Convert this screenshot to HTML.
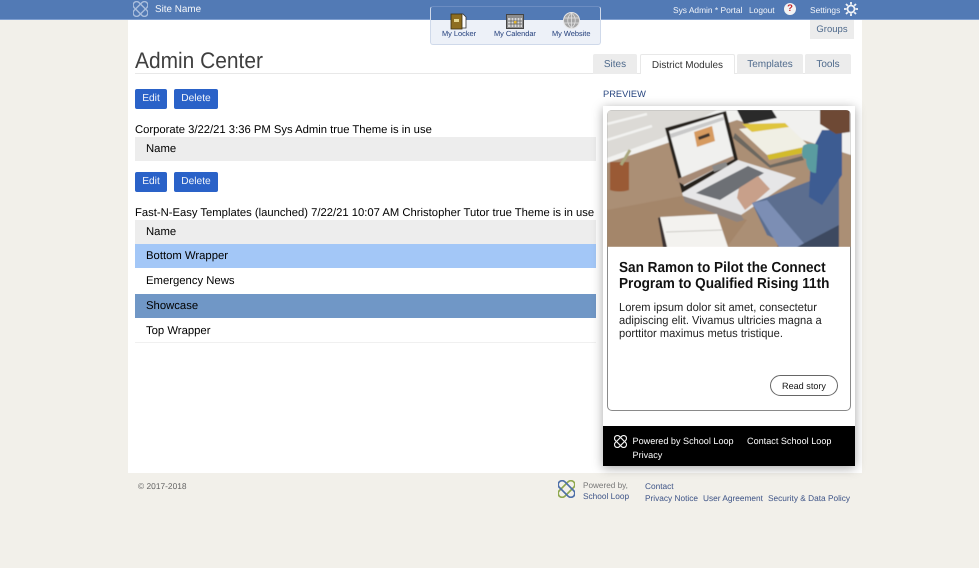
<!DOCTYPE html>
<html><head><meta charset="utf-8"><style>
html,body{margin:0;padding:0}
body{width:979px;height:568px;position:relative;overflow:hidden;background:#f2f0ea;font-family:"Liberation Sans",sans-serif;color:#000;text-rendering:geometricPrecision}
#wrap{position:absolute;left:0;top:0;width:979px;height:568px;filter:blur(.3px)}
.a{position:absolute;white-space:nowrap}
.bar{left:0;top:0;width:979px;height:19px;background:#527ab5;border-bottom:1px solid #7f9fd0;box-sizing:content-box}
.w{color:#f4f6fa;font-size:8.4px;line-height:12px}
.tab{background:#ececec;color:#4f6a8c;font-size:10px;text-align:center;box-sizing:border-box;height:20px;line-height:21px;top:54px;border-radius:2px 2px 0 0}
.btn{background:#2a62c8;color:#f2f5fb;font-size:10.2px;text-align:center;height:20px;line-height:20.5px;border-radius:2px;top:89px}
.row{left:135px;width:461px;height:24px;line-height:24px;font-size:11.3px;padding-left:11px;box-sizing:border-box}
.m{font-size:7.4px;color:#1d3a78;line-height:10px}
.l{font-size:8.3px;color:#3e5487;line-height:10px}
.t{font-size:11.25px;line-height:12px;color:#000}
.sb{font-weight:bold;font-size:14.6px;line-height:17px;color:#111;transform:scaleX(.93);transform-origin:0 0}
.p{font-size:11.6px;line-height:13px;color:#222;transform:scaleX(.96);transform-origin:0 0}
.f{color:#fff;font-size:9.1px;line-height:12px}
</style></head><body><div id="wrap">
<div class="a" style="left:128px;top:19px;width:734px;height:454px;background:#fff"></div>
<div class="a bar"></div>

<svg class="a" style="left:133px;top:1px" width="15" height="16" viewBox="0 0 15 16" fill="none" stroke="#a9bedd" stroke-width="1.400"><rect x="4" y="-1" width="7" height="18" rx="3.500" transform="rotate(45 7.500 8)"/><rect x="4" y="-1" width="7" height="18" rx="3.500" transform="rotate(-45 7.500 8)"/></svg>
<div class="a w" style="left:155px;top:3.500px;font-size:9.900px">Site Name</div>
<div class="a w" style="left:673px;top:3.500px">Sys Admin * Portal</div>
<div class="a w" style="left:749px;top:3.500px">Logout</div>
<div class="a" style="left:784px;top:3px;width:12px;height:12px;border-radius:50%;background:#f4f4f4;color:#c3262c;font:bold 9.500px/12px 'Liberation Sans',sans-serif;text-align:center">?</div>
<div class="a w" style="left:810px;top:3.500px">Settings</div>
<svg class="a" style="left:844px;top:2px" width="14" height="14" viewBox="0 0 14 14" fill="none" stroke="#f2f4f8"><circle cx="7" cy="7" r="3.500" stroke-width="1.700"/><path stroke-width="1.800" d="M7 0v2.500M7 11.500V14M0 7h2.500M11.500 7H14M2 2l1.800 1.800M10.200 10.200 12 12M2 12l1.800-1.800M10.200 3.800 12 2"/></svg>

<div class="a" style="left:430px;top:6px;width:171px;height:39px;border:1px solid #cfd9ea;border-top-color:#6c8dc2;border-radius:3px;box-sizing:border-box;background:linear-gradient(#527ab5 0,#527ab5 13px,#edf1f8 13px)"></div>
<svg class="a" style="left:450px;top:13px" width="18" height="18" viewBox="0 0 18 18"><path d="M10 1h3l3 3v11h-6z" fill="#fff" stroke="#333" stroke-width=".8"/><rect x="1" y="1" width="11" height="15" fill="#8e6d20" stroke="#3a2f15" stroke-width=".8"/><rect x="4" y="6" width="5" height="3" fill="#e5d690"/></svg>
<svg class="a" style="left:506px;top:14px" width="18" height="16" viewBox="0 0 18 16"><rect x=".5" y=".5" width="17" height="14" fill="#8c8c8c" stroke="#444"/><rect x="2" y="4" width="14" height="9" fill="#d8d8d8"/><path d="M2 7h14M2 10h14M5 4v9M8 4v9M11 4v9M14 4v9" stroke="#555" stroke-width=".7"/><rect x="8" y="7" width="2.500" height="2.500" fill="#e2b530"/></svg>
<svg class="a" style="left:563px;top:12px" width="17" height="17" viewBox="0 0 17 17"><circle cx="8.500" cy="8.500" r="8" fill="#a5a5a5" stroke="#e6e6e6"/><path d="M1 6h15M1 11h15M8.500 1c-5 4-5 11 0 15M8.500 1c5 4 5 11 0 15M8.500 1v15" stroke="#e2e2e2" stroke-width=".8" fill="none"/></svg>
<div class="a m" style="left:442px;top:28.500px">My Locker</div>
<div class="a m" style="left:494px;top:28.500px">My Calendar</div>
<div class="a m" style="left:552px;top:28.500px">My Website</div>

<div class="a" style="left:810px;top:20px;width:44px;height:19px;background:#ececec;color:#4f6a8c;font-size:9.500px;line-height:19px;text-align:center">Groups</div>

<div class="a" style="left:135px;top:47px;font-size:22.500px;line-height:28px;color:#3f3f3f;transform:scaleX(.93);transform-origin:0 0">Admin Center</div>
<div class="a" style="left:135px;top:73px;width:716px;height:1px;background:#e8e8e8"></div>

<div class="a tab" style="left:593px;width:44px">Sites</div>
<div class="a tab" style="left:640px;width:95px;background:#fff;color:#333;border:1px solid #e8e8e8;border-bottom:0">District Modules</div>
<div class="a tab" style="left:737px;width:66px">Templates</div>
<div class="a tab" style="left:805px;width:46px">Tools</div>

<div class="a btn" style="left:135px;width:32px">Edit</div>
<div class="a btn" style="left:174px;width:44px">Delete</div>
<div class="a t" style="left:135px;top:124px">Corporate 3/22/21 3:36 PM Sys Admin true Theme is in use</div>
<div class="a row" style="top:136.500px;background:#ededed">Name</div>
<div class="a btn" style="left:135px;width:32px;top:172px">Edit</div>
<div class="a btn" style="left:174px;width:44px;top:172px">Delete</div>
<div class="a t" style="left:135px;top:207px">Fast-N-Easy Templates (launched) 7/22/21 10:07 AM Christopher Tutor true Theme is in use</div>
<div class="a row" style="top:219.500px;background:#ededed">Name</div>
<div class="a row" style="top:244px;background:#a3c7f7">Bottom Wrapper</div>
<div class="a row" style="top:269px">Emergency News</div>
<div class="a row" style="top:293.500px;background:#7097c6">Showcase</div>
<div class="a row" style="top:318.500px;border-bottom:1px solid #f0f0f0;height:24.500px">Top Wrapper</div>

<div class="a" style="left:603px;top:87.500px;font-size:9.300px;line-height:12px;color:#27457f">PREVIEW</div>

<div class="a" style="left:603px;top:106px;width:252px;height:360px;background:#fff;box-shadow:0 2px 10px rgba(0,0,0,.35)"></div>
<div class="a" style="left:607px;top:110px;width:244px;height:301px;box-sizing:border-box;border:1px solid #8a8a8a;border-radius:5px"></div>

<svg class="a" style="left:607px;top:110px;border-radius:5px 5px 0 0" width="244" height="137" viewBox="0 0 244 137">
<defs><filter id="b"><feGaussianBlur stdDeviation=".6"/></filter></defs>
<g filter="url(#b)">
<rect width="244" height="137" fill="#ab8f75"/>
<path d="M0 0H244V45L222 38 130 10 0 53Z" fill="#f1f1ef"/>
<path d="M0 0H110L55 28 0 48Z" fill="#dcdad6"/>
<path d="M0 14l40-10M0 30l45-14" stroke="#f2f2f0" stroke-width="2.500"/>
<path d="M0 100 80 85 140 110 120 137H0Z" fill="#a4866b"/>
<path d="M180 110 232 90V137H170Z" fill="#8a6d56"/>
<path d="M130 0h35l5 8-33 6z" fill="#2b2b2b"/>
<path d="M58 18 119 1 131 50 75 83Z" fill="#26201e"/>
<path d="M62 21 116 4 127 49 77 76Z" fill="#f0f0ee"/>
<path d="M63 24 116 7 117 10 64 28Z" fill="#c9c9c9"/>
<path d="M87 22l18-6 3 15-18 6z" fill="#d69a5f"/>
<path d="M91 27l11-4 1 3-11 4z" fill="#40352f"/>
<path d="M68 70l58-24 1 3-50 26z" fill="#a68a74"/>
<path d="M105 56l14-4 2 5-14 5z" fill="#888"/>
<path d="M75 83 131 50 189 68 134 105 76 86Z" fill="#e6e6e7"/>
<path d="M76 86 134 105 137 110 130 112 78 92Z" fill="#8d8480"/>
<path d="M89 83 141 56 157 63 113 90Z" fill="#6d7075"/>
<path d="M132 78l19-12 12 13-15 13-10 8-8-12z" fill="#c8a08a"/>
<path d="M145 93 232 60 232 127 185 137 160 125Z" fill="#5c6e8f"/>
<path d="M145 93 160 90 200 137H172Z" fill="#7b8eb4"/>
<path d="M190 137 232 115V137Z" fill="#3d4860"/>
<path d="M215 20h20v45l-20 30-13-8 2-45z" fill="#3c5b92"/>
<path d="M213 0h30v22l-14 2-16-10z" fill="#6e4a36"/>
<path d="M132 19 178 13 202 36 160 45Z" fill="#f0efe4"/>
<path d="M135 14 178 13 182 17 145 22z" fill="#dfc53e"/>
<path d="M160 45 202 36 202 42 162 50Z" fill="#d2bb2c"/>
<path d="M128 23 163 55 195 46 197 50 163 58 126 28Z" fill="#6c6760"/>
<path d="M196 36c2-3 12-3 15-1l-2 28c-8 0-10-8-10-14-4 0-5-6-3-13z" fill="#5a9ca0"/>
<path d="M3 52h19v28c-5 2-14 2-19 0z" fill="#9a5a34"/>
<path d="M14 55l9-15" stroke="#a9a67c" stroke-width="3"/>
<path d="M53 107 110 104 121 137H60Z" fill="#f3f2ef"/>
<path d="M53 107 60 137H56L51 108z" fill="#3a3330"/>
<path d="M59 122l56-2" stroke="#cdcbc6"/>
</g></svg>

<div class="a sb" style="left:619px;top:259.500px">San Ramon to Pilot the Connect</div>
<div class="a sb" style="left:619px;top:276px">Program to Qualified Rising 11th</div>
<div class="a p" style="left:619px;top:300.500px">Lorem ipsum dolor sit amet, consectetur</div>
<div class="a p" style="left:619px;top:313.500px">adipiscing elit. Vivamus ultricies magna a</div>
<div class="a p" style="left:619px;top:326.500px">porttitor maximus metus tristique.</div>
<div class="a" style="left:770px;top:375px;width:68px;height:21px;box-sizing:border-box;border:1px solid #666;border-radius:11px;text-align:center;font-size:9.100px;line-height:20px;color:#111">Read story</div>

<div class="a" style="left:603px;top:426px;width:252px;height:40px;background:#000"></div>
<svg class="a" style="left:614px;top:435px" width="13" height="13" viewBox="0 0 15 16" fill="none" stroke="#f2f2f2" stroke-width="1.400"><rect x="4" y="-1" width="7" height="18" rx="3.500" transform="rotate(45 7.500 8)"/><rect x="4" y="-1" width="7" height="18" rx="3.500" transform="rotate(-45 7.500 8)"/></svg>
<div class="a f" style="left:632.500px;top:435px">Powered by School Loop</div>
<div class="a f" style="left:747px;top:435px">Contact School Loop</div>
<div class="a f" style="left:632.500px;top:448.500px">Privacy</div>

<div class="a" style="left:138px;top:481px;font-size:8.400px;line-height:10px;color:#666">© 2017-2018</div>
<svg class="a" style="left:558px;top:480px" width="17" height="18" viewBox="0 0 15 16" fill="none" stroke-width="1.500"><rect x="4" y="-1" width="7" height="18" rx="3.500" stroke="#8fa84e" transform="rotate(45 7.500 8)"/><rect x="4" y="-1" width="7" height="18" rx="3.500" stroke="#4d6fa8" transform="rotate(-45 7.500 8)"/></svg>
<div class="a" style="left:583px;top:481px;font-size:8.200px;line-height:10px;color:#777">Powered by,</div>
<div class="a l" style="left:583px;top:491px">School Loop</div>
<div class="a l" style="left:645px;top:481px">Contact</div>
<div class="a l" style="left:645px;top:493px">Privacy Notice</div>
<div class="a l" style="left:703px;top:493px">User Agreement</div>
<div class="a l" style="left:768px;top:493px">Security &amp; Data Policy</div>
</div></body></html>
